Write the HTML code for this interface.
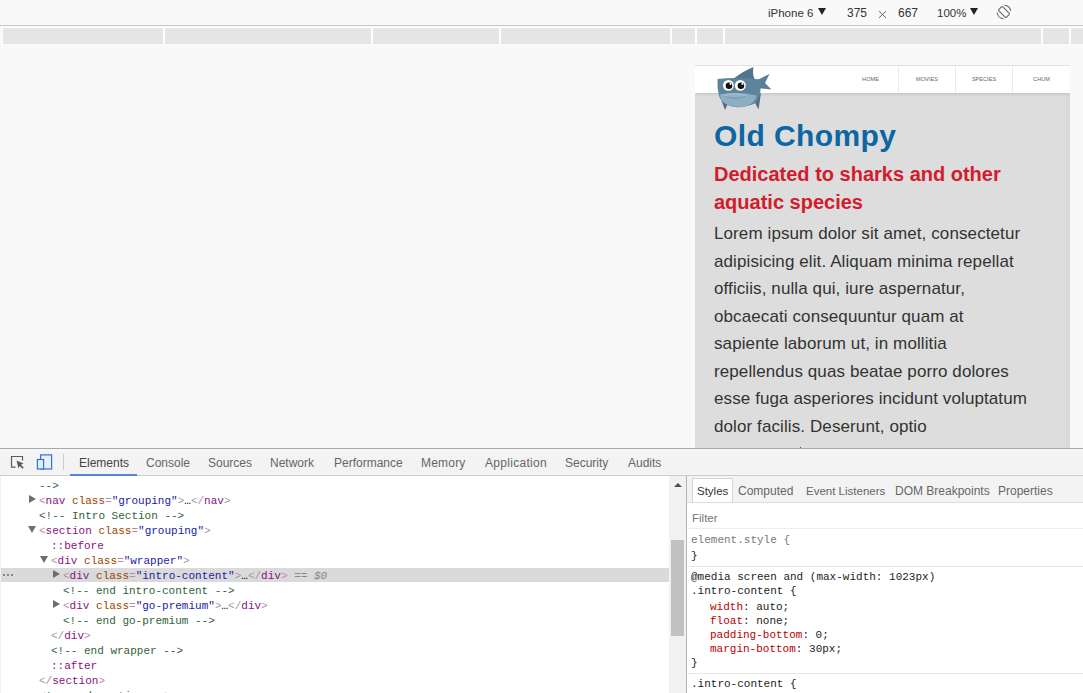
<!DOCTYPE html>
<html><head><meta charset="utf-8">
<style>
*{box-sizing:border-box;margin:0;padding:0}
html,body{width:1083px;height:693px;overflow:hidden;background:#f9f9f9;font-family:"Liberation Sans",sans-serif;position:relative}
.a{position:absolute}
.t12{font-size:12px;white-space:nowrap;line-height:14px}
#topbar{left:0;top:0;width:1083px;height:26px;background:#f9f9f9;border-bottom:1px solid #c8c8c8}
#topbar span{position:absolute;top:6px;color:#333}
.mq{position:absolute;top:28px;height:16px;background:#e5e5e5}
#page{left:695px;top:65px;width:375px;height:383px;background:#dddddd;overflow:hidden}
#hdr{position:absolute;left:0;top:0;width:375px;height:28px;background:#fff;border-top:1px solid #e2e2e2;box-shadow:0 1px 3px rgba(0,0,0,.14);z-index:2}
.nav{position:absolute;top:0;height:27px;border-left:1px solid #ebebeb;font-size:5.6px;color:#666;text-align:center;line-height:26px;letter-spacing:0}
h1{position:absolute;left:19px;top:53px;letter-spacing:.4px;font-size:30px;font-weight:bold;color:#0b66a3;white-space:nowrap;line-height:36px}
h2{position:absolute;left:19px;top:95px;width:330px;font-size:20px;font-weight:bold;color:#d21c2c;line-height:28px;white-space:nowrap}
#lorem{position:absolute;left:19px;top:155px;font-size:17px;color:#333;line-height:27.57px;white-space:nowrap;letter-spacing:.1px}
#dt{left:0;top:448px;width:1083px;height:245px;background:#fff;border-top:1px solid #a8a8a8}
#tabs{position:absolute;left:0;top:0;width:1083px;height:27px;background:linear-gradient(#f9f9f9,#f3f3f3 4px);border-bottom:1px solid #cdcdcd}
#tabs span{position:absolute;top:7px;color:#666}
.mono{font-family:"Liberation Mono",monospace;font-size:11px;white-space:pre}
.ln{position:absolute;height:15px;line-height:15px}
.tg{color:#881280}.at{color:#994500}.av{color:#1a1aa6}.cm{color:#30623a}.br{color:#a894a6}
.tri{position:absolute;width:0;height:0}
.tr{border-top:4px solid transparent;border-bottom:4px solid transparent;border-left:7px solid #6e6e6e}
.td{border-left:4px solid transparent;border-right:4px solid transparent;border-top:7px solid #6e6e6e}
#sb{left:669px;top:476px;width:17px;height:217px;background:#f1f1f1}
#side{left:686px;top:476px;width:397px;height:217px;border-left:1px solid #b4b4b4;background:#fff}
#stabs{position:absolute;left:0;top:0;width:396px;height:27px;border-bottom:1px solid #dcdcdc;background:#f3f3f3}
#stabs span{position:absolute;top:8px;color:#666}
.css{position:absolute;left:4px;height:14px;line-height:14px;color:#222}
.pn{color:#b80000}
</style></head><body>

<div id="topbar" class="a">
  <span class="t12" style="left:768px;font-size:11.5px">iPhone 6</span>
  <span class="a" style="left:818px;top:8px;width:0;height:0;border-left:4px solid transparent;border-right:4px solid transparent;border-top:7px solid #222"></span>
  <span class="t12" style="left:847px">375</span>
  <svg class="a" style="left:878px;top:10px" width="9" height="9" viewBox="0 0 9 9"><path d="M1 1.2 L8 7.8 M8 1.2 L1 7.8" stroke="#666" stroke-width="1"/></svg>
  <span class="t12" style="left:898px">667</span>
  <span class="t12" style="left:937px;font-size:11.5px">100%</span>
  <span class="a" style="left:970px;top:8px;width:0;height:0;border-left:4px solid transparent;border-right:4px solid transparent;border-top:7px solid #222"></span>
  <svg class="a" style="left:995px;top:4px" width="18" height="16" viewBox="0 0 18 16">
    <path d="M9.36 1.21 A6.8 6.8 0 0 1 15.7 6.82 M8.64 14.79 A6.8 6.8 0 0 1 2.23 8.59" fill="none" stroke="#666" stroke-width="1.1"/>
    <rect x="6.2" y="2.6" width="5.6" height="10.8" rx="1" transform="rotate(-45 9 8)" fill="none" stroke="#666" stroke-width="1.1"/>
  </svg>
</div>
<div class="a" style="left:2px;top:27px;width:1081px;height:18px;background:#fdfdfd"></div>
<div class="mq" style="left:3px;width:160px"></div>
<div class="mq" style="left:165px;width:206px"></div>
<div class="mq" style="left:373px;width:126px"></div>
<div class="mq" style="left:501px;width:169px"></div>
<div class="mq" style="left:672px;width:23px"></div>
<div class="mq" style="left:697px;width:26px"></div>
<div class="mq" style="left:725px;width:316px"></div>
<div class="mq" style="left:1043px;width:26px"></div>
<div class="mq" style="left:1071px;width:12px"></div>

<div id="page" class="a">
  <div id="hdr">
    <div class="nav" style="left:147px;width:57px;border-left:none">HOME</div>
    <div class="nav" style="left:203px;width:57px">MOVIES</div>
    <div class="nav" style="left:260px;width:57px">SPECIES</div>
    <div class="nav" style="left:317px;width:58px">CHUM</div>
  </div>
  <div class="a" style="left:371px;top:29px;width:4px;height:360px;background:#d9d9d9"></div>
  <h1>Old Chompy</h1>
  <h2>Dedicated to sharks and other<br>aquatic species</h2>
  <div id="lorem">Lorem ipsum dolor sit amet, consectetur<br>adipisicing elit. Aliquam minima repellat<br>officiis, nulla qui, iure aspernatur,<br>obcaecati consequuntur quam at<br>sapiente laborum ut, in mollitia<br>repellendus quas beatae porro dolores<br>esse fuga asperiores incidunt voluptatum<br>dolor facilis. Deserunt, optio</div>
  <div class="a" style="left:105px;top:382px;width:1px;height:1px;background:#555"></div>
</div>
<svg class="a" style="left:710px;top:62px;z-index:3" width="70" height="50" viewBox="710 62 70 50">
  <!-- tail -->
  <path d="M757 80 L769.5 74 L765 83 L771.5 89.5 L758 88 Z" fill="#5b7f97"/>
  <!-- dorsal fin -->
  <path d="M733 79 Q745 70 753.5 67 Q752 74 755 80 Z" fill="#52758d"/>
  <!-- bottom fins -->
  <path d="M720.5 98 L725 110 L729 101 Z" fill="#4d6e86"/>
  <path d="M753 99 L758.5 109.5 L761 93 Z" fill="#4d6e86"/>
  <!-- body -->
  <path d="M717.5 79 Q737 77 760.5 79.5 Q762 95 756 103 Q745 108 735 107 Q722 105 719 96 Q717 88 717.5 79 Z" fill="#5e849c"/>
  <!-- belly -->
  <path d="M719.5 94.5 Q737 90.5 756.5 95.5 Q756 104 742 107 Q727 107.5 721 100 Z" fill="#8dadc2"/>
  <path d="M725.5 96.8 Q735.5 100.2 745.5 96.5" fill="none" stroke="#7899b0" stroke-width="1.2"/><path d="M724 95 Q735 93.5 746 95.3" fill="none" stroke="#a3bccd" stroke-width="1.5"/>
  <!-- eyes -->
  <circle cx="728.4" cy="85.4" r="5.4" fill="#fff"/>
  <circle cx="740.3" cy="85.4" r="5.4" fill="#fff"/>
  <circle cx="729" cy="85.8" r="3.3" fill="#111"/>
  <circle cx="740.9" cy="85.8" r="3.3" fill="#111"/>
  <circle cx="730.5" cy="84" r="1" fill="#fff"/>
  <circle cx="742.4" cy="84" r="1" fill="#fff"/>
</svg>

<div id="dt" class="a">
  <div id="tabs">
    <svg class="a" style="left:10px;top:6px" width="16" height="16" viewBox="0 0 16 16">
      <path d="M5.5 12.2 H1.5 V1.5 H12.5 V5.5" fill="none" stroke="#5a5a5a" stroke-width="1.2"/>
      <path d="M6.5 5.5 L13.6 8.5 L10.9 9.7 L13.7 12.5 L12.5 13.7 L9.7 10.9 L8.5 13.6 Z" fill="#5a5a5a"/>
    </svg>
    <svg class="a" style="left:36px;top:5px" width="18" height="18" viewBox="0 0 18 18">
      <rect x="4.6" y="0.9" width="11" height="14.1" fill="#e6efff" stroke="#3b6fd4" stroke-width="1.2"/>
      <rect x="1.4" y="5.5" width="6.2" height="9.5" fill="#d8f0ff" stroke="#3b6fd4" stroke-width="1.2"/>
    </svg>
    <div class="a" style="left:63px;top:5px;width:1px;height:16px;background:#ccc"></div>
    <span class="t12" style="left:79px;color:#444">Elements</span>
    <div class="a" style="left:70px;top:25px;width:67px;height:2px;background:#5585de"></div>
    <span class="t12" style="left:146px">Console</span>
    <span class="t12" style="left:208px">Sources</span>
    <span class="t12" style="left:270px">Network</span>
    <span class="t12" style="left:334px">Performance</span>
    <span class="t12" style="left:421px;letter-spacing:.2px">Memory</span>
    <span class="t12" style="left:485px;letter-spacing:.3px">Application</span>
    <span class="t12" style="left:565px">Security</span>
    <span class="t12" style="left:628px">Audits</span>
  </div>
</div>

<!-- elements tree -->
<div class="a" style="left:1px;top:568px;width:668px;height:14px;background:#dadada"></div>
<div class="a mono" style="left:0;top:0">
  <div class="ln cm" style="left:39px;top:479px">--&gt;</div>
  <div class="tri tr" style="left:29px;top:495px"></div>
  <div class="ln" style="left:39px;top:494px"><span class="br">&lt;</span><span class="tg">nav</span> <span class="at">class</span><span class="br">=</span><span class="av">"grouping"</span><span class="br">&gt;</span>…<span class="br">&lt;/</span><span class="tg">nav</span><span class="br">&gt;</span></div>
  <div class="ln cm" style="left:39px;top:509px">&lt;!-- Intro Section --&gt;</div>
  <div class="tri td" style="left:28px;top:526px"></div>
  <div class="ln" style="left:39px;top:524px"><span class="br">&lt;</span><span class="tg">section</span> <span class="at">class</span><span class="br">=</span><span class="av">"grouping"</span><span class="br">&gt;</span></div>
  <div class="ln tg" style="left:51px;top:539px">::before</div>
  <div class="tri td" style="left:40px;top:556px"></div>
  <div class="ln" style="left:51px;top:554px"><span class="br">&lt;</span><span class="tg">div</span> <span class="at">class</span><span class="br">=</span><span class="av">"wrapper"</span><span class="br">&gt;</span></div>
  <div class="a" style="left:3px;top:574px;width:2px;height:2px;background:#888"></div><div class="a" style="left:7px;top:574px;width:2px;height:2px;background:#888"></div><div class="a" style="left:11px;top:574px;width:2px;height:2px;background:#888"></div>
  <div class="tri tr" style="left:53px;top:570px"></div>
  <div class="ln" style="left:63px;top:569px"><span class="br">&lt;</span><span class="tg">div</span> <span class="at">class</span><span class="br">=</span><span class="av">"intro-content"</span><span class="br">&gt;</span>…<span class="br">&lt;/</span><span class="tg">div</span><span class="br">&gt;</span><span style="color:#888"> == <i>$0</i></span></div>
  <div class="ln cm" style="left:63px;top:584px">&lt;!-- end intro-content --&gt;</div>
  <div class="tri tr" style="left:53px;top:600px"></div>
  <div class="ln" style="left:63px;top:599px"><span class="br">&lt;</span><span class="tg">div</span> <span class="at">class</span><span class="br">=</span><span class="av">"go-premium"</span><span class="br">&gt;</span>…<span class="br">&lt;/</span><span class="tg">div</span><span class="br">&gt;</span></div>
  <div class="ln cm" style="left:63px;top:614px">&lt;!-- end go-premium --&gt;</div>
  <div class="ln" style="left:51px;top:629px"><span class="br">&lt;/</span><span class="tg">div</span><span class="br">&gt;</span></div>
  <div class="ln cm" style="left:51px;top:644px">&lt;!-- end wrapper --&gt;</div>
  <div class="ln tg" style="left:51px;top:659px">::after</div>
  <div class="ln" style="left:39px;top:674px"><span class="br">&lt;/</span><span class="tg">section</span><span class="br">&gt;</span></div>
  <div class="ln cm" style="left:39px;top:689px">&lt;!-- end section --&gt;</div>
</div>

<div class="a" style="left:0;top:476px;width:1px;height:217px;background:#f0f0f0"></div>
<div id="sb" class="a">
  <div class="a" style="left:5px;top:7px;width:0;height:0;border-left:4px solid transparent;border-right:4px solid transparent;border-bottom:4px solid #505050"></div>
  <div class="a" style="left:2px;top:64px;width:13px;height:96px;background:#c1c1c1"></div>
</div>

<div id="side" class="a">
  <div id="stabs">
    <div class="a" style="left:5px;top:2px;width:41px;height:24px;background:#fff;border:1px solid #d6d6d6;border-bottom:none"></div>
    <span class="t12" style="left:10px;color:#333;font-size:11.5px">Styles</span>
    <span class="t12" style="left:51px">Computed</span>
    <span class="t12" style="left:119px;font-size:11.5px">Event Listeners</span>
    <span class="t12" style="left:208px">DOM Breakpoints</span>
    <span class="t12" style="left:311px">Properties</span>
  </div>
  <span class="a t12" style="left:5px;top:35px;color:#777;font-size:11.5px">Filter</span>
  <div class="a" style="left:0;top:52px;width:396px;height:1px;background:#eee"></div>
  <div class="mono">
    <div class="css" style="top:57px;color:#777">element.style {</div>
    <div class="css" style="top:73px">}</div>
    <div class="a" style="left:0;top:90px;width:396px;height:1px;background:#e8e8e8"></div>
    <div class="css" style="top:94px">@media screen and (max-width: 1023px)</div>
    <div class="css" style="top:108px">.intro-content {</div>
    <div class="css" style="top:124px;left:23px"><span class="pn">width</span>: auto;</div>
    <div class="css" style="top:138px;left:23px"><span class="pn">float</span>: none;</div>
    <div class="css" style="top:152px;left:23px"><span class="pn">padding-bottom</span>: 0;</div>
    <div class="css" style="top:166px;left:23px"><span class="pn">margin-bottom</span>: 30px;</div>
    <div class="css" style="top:180px">}</div>
    <div class="a" style="left:0;top:197px;width:396px;height:1px;background:#e8e8e8"></div>
    <div class="css" style="top:201px">.intro-content {</div>
  </div>
</div>
</body></html>
